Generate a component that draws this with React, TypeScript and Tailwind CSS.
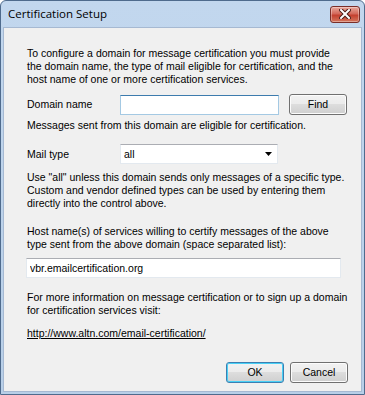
import { useState } from "react";

const body = "font-['Liberation_Sans',Arial,sans-serif] text-[10.5px] leading-[13px] text-black whitespace-nowrap";

function WinButton({ label, isDefault = false, className = "" }: { label: string; isDefault?: boolean; className?: string }) {
  return (
    <button
      className={`h-[21px] w-[58px] shrink-0 rounded-[3px] border ${
        isDefault ? "border-[#3c7fb1] shadow-[inset_0_0_0_1px_#48d0f6]" : "border-[#707070] shadow-[inset_0_0_0_1px_#fcfcfc]"
      } bg-[linear-gradient(#f2f2f2_0%,#ebebeb_50%,#dddddd_50%,#cfcfcf_100%)] ${body} leading-none ${className}`}
    >
      {label}
    </button>
  );
}

export default function App() {
  const [domain, setDomain] = useState("");
  const [mailType, setMailType] = useState("all");
  const [hosts, setHosts] = useState("vbr.emailcertification.org");

  return (
    <div className="w-[365px] h-[395px] flex flex-col bg-[linear-gradient(#c2d7ee,#b8cfe8)] border border-[#4f6b8d] rounded-t-[6px] overflow-hidden">
      {/* TITLE BAR */}
      <div className="h-[26px] shrink-0 flex items-center justify-between pl-[7px] pr-[4px]">
        <span className="font-['Open_Sans',sans-serif] text-[11.5px] text-black">Certification Setup</span>
        <div className="w-[30px] h-[17px] rounded-[3px] border border-[#7a2e28] bg-[linear-gradient(#e9a99c,#d3685a_45%,#c4402f_55%,#d4765d)] shadow-[inset_0_0_0_1px_rgba(255,255,255,0.35)] flex items-center justify-center">
          <svg width="12" height="10" viewBox="0 0 12 10">
            <path d="M2 1 L10 9 M10 1 L2 9" stroke="#4a1a14" strokeWidth="4" strokeLinecap="square" />
            <path d="M2 1 L10 9 M10 1 L2 9" stroke="#ffffff" strokeWidth="2" strokeLinecap="square" />
          </svg>
        </div>
      </div>

      {/* CLIENT AREA */}
      <div className="flex-1 mx-[2px] mb-[2px] bg-[#f0f0f0] border border-[#a6b9d2] pt-[19px] pl-[23px] pr-[10px] flex flex-col">
        <p className={body}>
          To configure a domain for message certification you must provide
          <br />
          the domain name, the type of mail eligible for certification, and the
          <br />
          host name of one or more certification services.
        </p>

        <div className="mt-[8px] flex items-center">
          <span className={`${body} w-[93px] shrink-0`}>Domain name</span>
          <input
            value={domain}
            onChange={(e) => setDomain(e.target.value)}
            className={`h-[20px] w-[159px] shrink-0 bg-white border border-[#a4c9e3] border-t-[#3d7bad] outline-none px-[3px] ${body}`}
          />
          <WinButton label="Find" className="ml-[10px]" />
        </div>

        <p className={`${body} mt-[4px]`}>Messages sent from this domain are eligible for certification.</p>

        <div className="mt-[12px] flex items-center">
          <span className={`${body} w-[93px] shrink-0`}>Mail type</span>
          <div className="relative h-[20px] w-[158px] shrink-0 bg-white border border-[#e3e9ef] border-t-[#abadb3] flex items-center">
            <input
              value={mailType}
              onChange={(e) => setMailType(e.target.value)}
              className={`w-full h-full bg-transparent outline-none px-[3px] ${body}`}
            />
            <svg className="absolute right-[5px] top-[7px]" width="7" height="4" viewBox="0 0 7 4">
              <path d="M0 0 H7 L3.5 4 Z" fill="#000" />
            </svg>
          </div>
        </div>

        <p className={`${body} mt-[7px]`}>
          Use "all" unless this domain sends only messages of a specific type.
          <br />
          Custom and vendor defined types can be used by entering them
          <br />
          directly into the control above.
        </p>

        <p className={`${body} mt-[15px]`}>
          Host name(s) of services willing to certify messages of the above
          <br />
          type sent from the above domain (space separated list):
        </p>

        <input
          value={hosts}
          onChange={(e) => setHosts(e.target.value)}
          className={`mt-[7px] h-[20px] w-[315px] -ml-[1px] bg-white border border-[#e3e9ef] border-t-[#abadb3] outline-none px-[3px] ${body}`}
        />

        <p className={`${body} mt-[13px]`}>
          For more information on message certification or to sign up a domain
          <br />
          for certification services visit:
        </p>

        <a href="#" className={`${body} mt-[10px] text-[#0000ff] underline self-start`}>
          http://www.altn.com/email-certification/
        </a>

        <div className="mt-auto mb-[8px] pr-[3px] flex justify-end gap-[6px]">
          <WinButton label="OK" isDefault />
          <WinButton label="Cancel" />
        </div>
      </div>
    </div>
  );
}
